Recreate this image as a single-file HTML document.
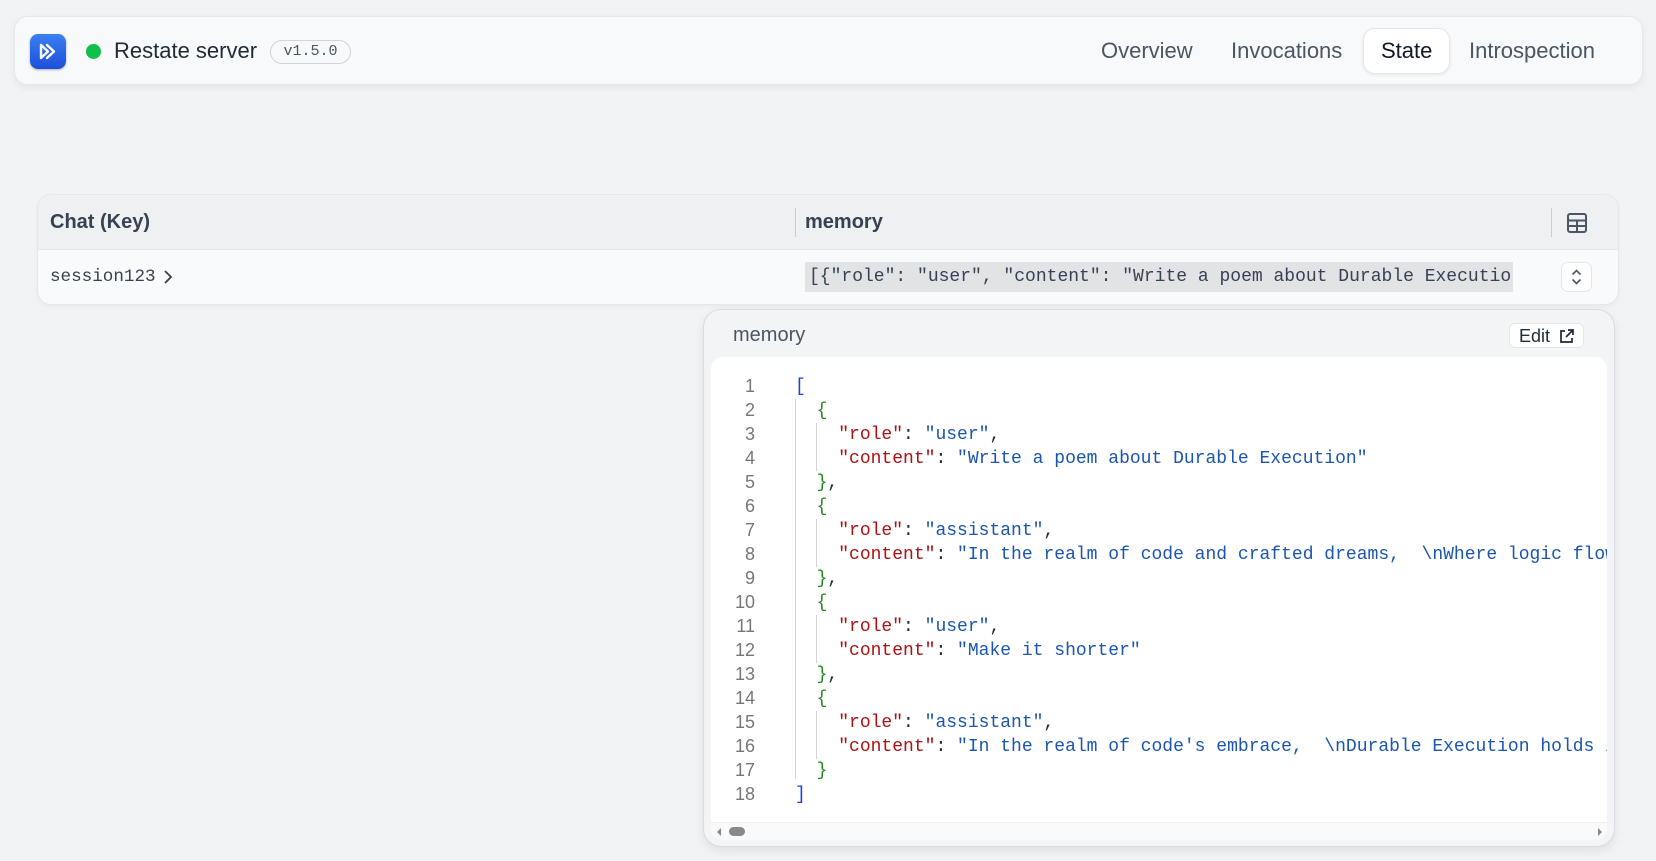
<!DOCTYPE html>
<html><head><meta charset="utf-8"><style>
*{box-sizing:border-box;margin:0;padding:0}
body{width:1656px;height:861px;background:#f2f3f5;font-family:"Liberation Sans",sans-serif;color:#1f2937;position:relative;overflow:hidden}
.abs{position:absolute}
.mono{font-family:"Liberation Mono",monospace}
.hdr{left:14px;top:16px;width:1629px;height:69px;background:#f8f9fa;border:1px solid #e5e7eb;border-radius:14px;box-shadow:0 3px 8px rgba(0,0,0,.06)}
.nav{top:38px;font-size:22px;color:#4b5563}
.tbl{left:37px;top:194px;width:1582px;height:111px;background:#f9fafb;border:1px solid #e5e7eb;border-radius:14px;overflow:hidden;box-shadow:0 2px 4px rgba(0,0,0,.04)}
.code{font-size:18px;line-height:24px;white-space:pre}
.k{color:#a11}.s{color:#1a55b0}.g{color:#228b22}.b{color:#1a3fe0}
</style></head><body>
<div class="abs hdr"></div>
<div class="abs" style="left:30px;top:34px;width:36px;height:35px;border-radius:8px;background:linear-gradient(#3b7ff5,#1d4fd8);box-shadow:0 1px 2px rgba(0,0,0,.3)">
<svg width="36" height="35" viewBox="0 0 36 35"><path d="M11 11v13M11 11l7 6.5-7 6.5M17 11l7 6.5-7 6.5" fill="none" stroke="#fff" stroke-width="2.4" stroke-linecap="round" stroke-linejoin="round"/></svg></div>
<div class="abs" style="left:86px;top:44px;width:15px;height:15px;border-radius:50%;background:#10c04a"></div>
<div class="abs" style="left:114px;top:38px;font-size:22px;color:#1f2937">Restate server</div>
<div class="abs mono" style="left:270px;top:40px;width:81px;height:24px;border:1px solid #d1d5db;border-radius:12px;font-size:15px;color:#4b5563;text-align:center;line-height:22px">v1.5.0</div>
<div class="abs nav" style="left:1101px">Overview</div>
<div class="abs nav" style="left:1231px">Invocations</div>
<div class="abs" style="left:1363px;top:28px;width:87px;height:46px;background:#fff;border:1px solid #e5e7eb;border-radius:12px;box-shadow:0 1px 3px rgba(0,0,0,.08)"></div>
<div class="abs nav" style="left:1381px;color:#111827">State</div>
<div class="abs nav" style="left:1469px">Introspection</div>

<div class="abs tbl">
<div class="abs" style="left:0;top:0;width:1582px;height:55px;background:#eff0f2;border-bottom:1px solid #e5e7eb"></div>
<div class="abs" style="left:12px;top:16px;font-size:20px;font-weight:bold;color:#374151">Chat (Key)</div>
<div class="abs" style="left:757px;top:13px;width:1px;height:29px;background:#c9ccd1"></div>
<div class="abs" style="left:767px;top:16px;font-size:20px;font-weight:bold;color:#374151">memory</div>
<div class="abs" style="left:1513px;top:13px;width:1px;height:29px;background:#c9ccd1"></div>
<svg class="abs" style="left:1528px;top:17px" width="22" height="22" viewBox="0 0 22 22"><rect x="2" y="2" width="18" height="18" rx="2" fill="none" stroke="#4b5563" stroke-width="2"/><path d="M2 8.5h18M2 14h18M11 8.5V20" stroke="#4b5563" stroke-width="2"/></svg>
<div class="abs mono" style="left:12px;top:72px;font-size:17.6px;color:#374151">session123</div>
<svg class="abs" style="left:124px;top:73px" width="12" height="18" viewBox="0 0 12 18"><path d="M3 3l6 6-6 6" fill="none" stroke="#374151" stroke-width="1.8"/></svg>
<div class="abs mono" style="left:767px;top:67px;width:708px;height:30px;background:#e2e3e5;font-size:18px;color:#374151;line-height:30px;padding-left:4px;white-space:pre;overflow:hidden">[{"role": "user", "content": "Write a poem about Durable Executio</div>
<div class="abs" style="left:1523px;top:67px;width:31px;height:30px;background:#fff;border:1px solid #e5e7eb;border-radius:7px"><svg width="29" height="28" viewBox="0 0 29 28"><path d="M10.5 11.5l4-4 4 4M10.5 16.5l4 4 4-4" fill="none" stroke="#4b5563" stroke-width="1.6"/></svg></div>
</div>

<div class="abs" style="left:1605px;top:320px;font-size:18px;color:#6b7280">)</div>
<div class="abs" style="left:703px;top:309px;width:912px;height:538px;background:#f3f4f6;border:1px solid #d9dbdf;border-radius:18px;box-shadow:0 4px 10px rgba(0,0,0,.08)"></div>
<div class="abs" style="left:733px;top:324px;font-size:20px;color:#4b5563">memory</div>
<div class="abs" style="left:1509px;top:323px;width:75px;height:25px;background:#fff;border:1px solid #e5e7eb;border-radius:6px;font-size:18px;color:#1f2937;line-height:24px;padding-left:9px">Edit
<svg class="abs" style="left:48px;top:4px" width="17" height="17" viewBox="0 0 17 17"><path d="M7 3H3v11h11v-4M10 2h5v5M15 2L8 9" fill="none" stroke="#1f2937" stroke-width="1.7"/></svg></div>
<div class="abs" style="left:711px;top:357px;width:896px;height:483px;background:#fff;border-radius:12px;overflow:hidden">
<div class="abs code" style="left:0;top:17px;width:44px;text-align:right;color:#777">1
2
3
4
5
6
7
8
9
10
11
12
13
14
15
16
17
18</div>
<div class="abs" style="left:84px;top:42px;width:1px;height:380px;background:#d4d4d4"></div>
<div class="abs" style="left:105px;top:66px;width:1px;height:48px;background:#d4d4d4"></div>
<div class="abs" style="left:105px;top:162px;width:1px;height:48px;background:#d4d4d4"></div>
<div class="abs" style="left:105px;top:258px;width:1px;height:48px;background:#d4d4d4"></div>
<div class="abs" style="left:105px;top:354px;width:1px;height:48px;background:#d4d4d4"></div>
<div class="abs code mono" style="left:84px;top:18px"><span class="b">[</span>
  <span class="g">{</span>
    <span class="k">"role"</span>: <span class="s">"user"</span>,
    <span class="k">"content"</span>: <span class="s">"Write a poem about Durable Execution"</span>
  <span class="g">}</span>,
  <span class="g">{</span>
    <span class="k">"role"</span>: <span class="s">"assistant"</span>,
    <span class="k">"content"</span>: <span class="s">"In the realm of code and crafted dreams,  \nWhere logic flows</span>
  <span class="g">}</span>,
  <span class="g">{</span>
    <span class="k">"role"</span>: <span class="s">"user"</span>,
    <span class="k">"content"</span>: <span class="s">"Make it shorter"</span>
  <span class="g">}</span>,
  <span class="g">{</span>
    <span class="k">"role"</span>: <span class="s">"assistant"</span>,
    <span class="k">"content"</span>: <span class="s">"In the realm of code's embrace,  \nDurable Execution holds its</span>
  <span class="g">}</span>
<span class="b">]</span></div>
<div class="abs" style="left:0;top:465px;width:896px;height:18px;background:#fafafa;border-top:1px solid #f0f0f0"></div>
<div class="abs" style="left:18px;top:470px;width:16px;height:9px;border-radius:5px;background:#8a8a8a"></div>
<div class="abs" style="left:6px;top:471px;width:0;height:0;border:4px solid transparent;border-right-color:#888;border-left:0"></div>
<div class="abs" style="left:887px;top:471px;width:0;height:0;border:4px solid transparent;border-left-color:#888;border-right:0"></div>
</div>
</body></html>
